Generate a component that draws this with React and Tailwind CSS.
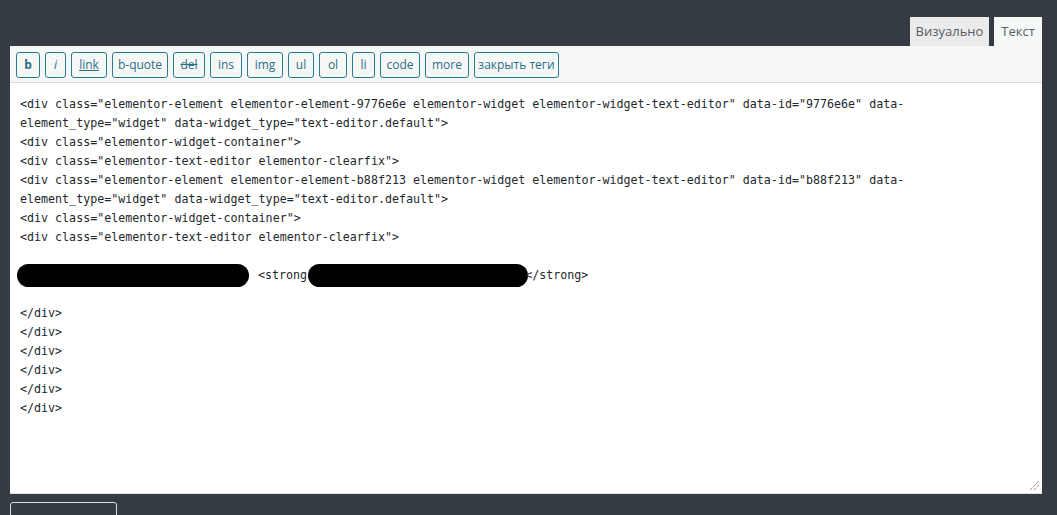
import React from 'react';

const BUTTONS = [
  { label: 'b', w: 'w-[24px]', extra: 'font-bold' },
  { label: 'i', w: 'w-[21px]', extra: 'italic' },
  { label: 'link', w: 'w-[36px]', extra: 'underline' },
  { label: 'b-quote', w: 'w-[56px]', extra: '' },
  { label: 'del', w: 'w-[32px]', extra: 'line-through' },
  { label: 'ins', w: 'w-[32px]', extra: '' },
  { label: 'img', w: 'w-[36px]', extra: '' },
  { label: 'ul', w: 'w-[26px]', extra: '' },
  { label: 'ol', w: 'w-[28px]', extra: '' },
  { label: 'li', w: 'w-[23px]', extra: '' },
  { label: 'code', w: 'w-[40px]', extra: '' },
  { label: 'more', w: 'w-[44px]', extra: '' },
  { label: 'закрыть теги', w: 'w-[85px]', extra: '' },
];

const TOP_LINES = [
  '<div class="elementor-element elementor-element-9776e6e elementor-widget elementor-widget-text-editor" data-id="9776e6e" data-',
  'element_type="widget" data-widget_type="text-editor.default">',
  '<div class="elementor-widget-container">',
  '<div class="elementor-text-editor elementor-clearfix">',
  '<div class="elementor-element elementor-element-b88f213 elementor-widget elementor-widget-text-editor" data-id="b88f213" data-',
  'element_type="widget" data-widget_type="text-editor.default">',
  '<div class="elementor-widget-container">',
  '<div class="elementor-text-editor elementor-clearfix">',
];

function Line({ children }) {
  return <div className="h-[19px] whitespace-pre">{children}</div>;
}

export default function App() {
  return (
    <div className="h-[515px] w-full overflow-hidden bg-[#343b43] pl-[10px] pr-[15px] pt-[17px]">
      {/* tabs */}
      <div className="flex justify-end gap-[5px] font-['Open_Sans',sans-serif] text-[13px] text-[#555d66]">
        <div className="flex h-[29px] w-[79px] items-center justify-center bg-[#ebebeb]">Визуально</div>
        <div className="flex h-[29px] w-[48px] items-center justify-center bg-[#f6f7f7]">Текст</div>
      </div>

      <div className="bg-white">
        {/* quicktags toolbar */}
        <div className="flex h-[37px] gap-[5px] border-b border-[#dcdcde] bg-[#f6f7f7] pl-[6px] pt-[6px] font-['Open_Sans',sans-serif] text-[12px] text-[#2c6f86]">
          {BUTTONS.map(b => (
            <div
              key={b.label}
              className={`flex h-[26px] ${b.w} items-center justify-center rounded-[3px] border border-[#2a7a90] bg-[#f6f7f7] ${b.extra}`}
            >
              {b.label}
            </div>
          ))}
        </div>

        {/* textarea */}
        <div className="relative h-[411px] border-b border-[#dcdcde] px-[10px] pt-[12px] font-['DejaVu_Sans_Mono',monospace] text-[11.66px] leading-[19px] text-[#23282d]">
          {TOP_LINES.map((l, i) => (
            <Line key={i}>{l}</Line>
          ))}
          <Line>{' '}</Line>
          <div className="flex h-[19px] items-center whitespace-pre">
            <span className="ml-[-3px] inline-block h-[23px] w-[232px] rounded-full bg-black" />
            <span className="ml-[9px]">{'<strong'}</span>
            <span className="ml-[1px] inline-block h-[23px] w-[220px] rounded-full bg-black" />
            <span className="ml-[-3px]">{'</strong>'}</span>
          </div>
          <Line>{' '}</Line>
          {Array.from({ length: 6 }).map((_, i) => (
            <Line key={i}>{'</div>'}</Line>
          ))}

          {/* resize grip */}
          <svg className="absolute bottom-[2px] right-[2px]" width="11" height="11" viewBox="0 0 11 11">
            <line x1="1" y1="10" x2="10" y2="1" stroke="#555" strokeWidth="1" strokeDasharray="1 1" />
            <line x1="5" y1="10" x2="10" y2="5" stroke="#555" strokeWidth="1" strokeDasharray="1 1" />
          </svg>
        </div>
      </div>

      {/* button below, cut off by the window */}
      <div className="mt-[8px] h-[24px] w-[107px] rounded-[3px] border border-[#dcdcde]" />
    </div>
  );
}
